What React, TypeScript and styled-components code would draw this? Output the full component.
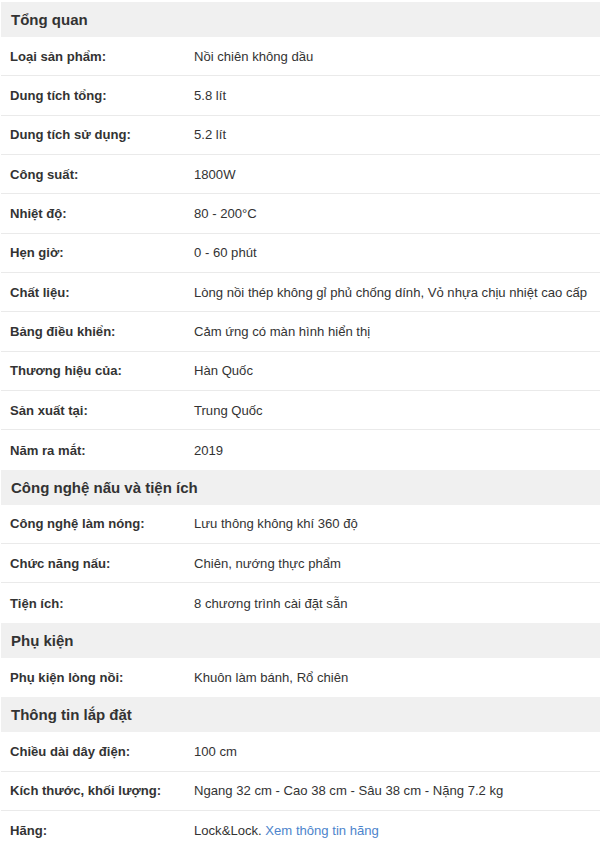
import styled, { createGlobalStyle } from "styled-components";

const GlobalStyle = createGlobalStyle`
  body {
    margin: 0;
    background: #fff;
    font-family: "Liberation Sans", Arial, sans-serif;
    color: #333;
  }
`;

const Table = styled.div`
  margin: 2px 2px 0 1px;
  display: flex;
  flex-direction: column;
`;

const SectionTitle = styled.div`
  height: 35px;
  display: flex;
  align-items: center;
  padding-left: 10px;
  background: #f0f0f0;
  font-size: 15px;
  font-weight: 700;
  color: #333;
`;

const Row = styled.div`
  box-sizing: border-box;
  height: 39.35px;
  display: grid;
  grid-template-columns: 184px 1fr;
  align-items: center;
  padding-left: 9px;
  border-bottom: 1px solid #eaeaea;
  font-size: 13.1px;

  &:last-child {
    border-bottom: none;
  }
`;

const Label = styled.span`
  font-weight: 700;
  color: #333;
`;

const Value = styled.span`
  color: #333;
  white-space: nowrap;
`;

const Link = styled.a`
  color: #4d84cc;
  text-decoration: none;
`;

interface ISpec {
  label: string;
  value: React.ReactNode;
}

interface ISection {
  title: string;
  specs: ISpec[];
}

const sections: ISection[] = [
  {
    title: "Tổng quan",
    specs: [
      { label: "Loại sản phẩm:", value: "Nồi chiên không dầu" },
      { label: "Dung tích tổng:", value: "5.8 lít" },
      { label: "Dung tích sử dụng:", value: "5.2 lít" },
      { label: "Công suất:", value: "1800W" },
      { label: "Nhiệt độ:", value: "80 - 200°C" },
      { label: "Hẹn giờ:", value: "0 - 60 phút" },
      {
        label: "Chất liệu:",
        value: "Lòng nồi thép không gỉ phủ chống dính, Vỏ nhựa chịu nhiệt cao cấp",
      },
      { label: "Bảng điều khiển:", value: "Cảm ứng có màn hình hiển thị" },
      { label: "Thương hiệu của:", value: "Hàn Quốc" },
      { label: "Sản xuất tại:", value: "Trung Quốc" },
      { label: "Năm ra mắt:", value: "2019" },
    ],
  },
  {
    title: "Công nghệ nấu và tiện ích",
    specs: [
      { label: "Công nghệ làm nóng:", value: "Lưu thông không khí 360 độ" },
      { label: "Chức năng nấu:", value: "Chiên, nướng thực phẩm" },
      { label: "Tiện ích:", value: "8 chương trình cài đặt sẵn" },
    ],
  },
  {
    title: "Phụ kiện",
    specs: [{ label: "Phụ kiện lòng nồi:", value: "Khuôn làm bánh, Rổ chiên" }],
  },
  {
    title: "Thông tin lắp đặt",
    specs: [
      { label: "Chiều dài dây điện:", value: "100 cm" },
      {
        label: "Kích thước, khối lượng:",
        value: "Ngang 32 cm - Cao 38 cm - Sâu 38 cm - Nặng 7.2 kg",
      },
      {
        label: "Hãng:",
        value: (
          <>
            Lock&Lock. <Link href="#">Xem thông tin hãng</Link>
          </>
        ),
      },
    ],
  },
];

function Section({ title, specs }: ISection) {
  return (
    <>
      <SectionTitle>{title}</SectionTitle>
      <div>
        {specs.map((s) => (
          <Row key={s.label}>
            <Label>{s.label}</Label>
            <Value>{s.value}</Value>
          </Row>
        ))}
      </div>
    </>
  );
}

function App() {
  return (
    <>
      <GlobalStyle />
      <Table>
        {sections.map((s) => (
          <Section key={s.title} title={s.title} specs={s.specs} />
        ))}
      </Table>
    </>
  );
}

export default App;
